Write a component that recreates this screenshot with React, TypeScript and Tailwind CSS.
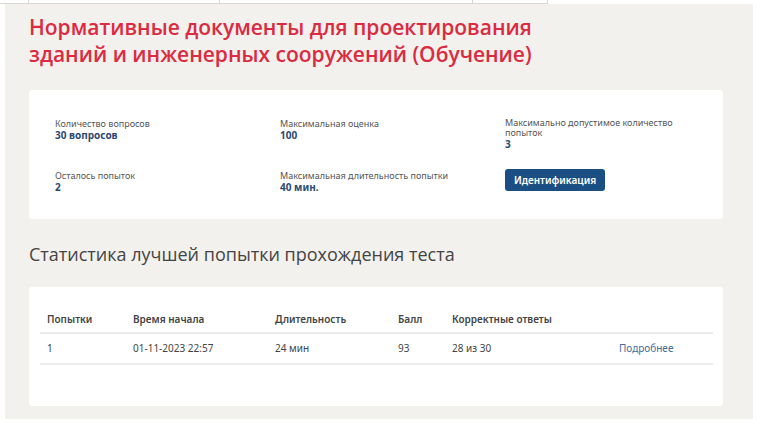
import React from 'react';

const cells = [29, 191, 253, 75];

const Info: React.FC<{ label: string; value: string }> = ({ label, value }) => (
  <div>
    <div className="text-[9px] leading-[11px] text-[#555]">{label}</div>
    <div className="text-[10px] leading-[12px] font-bold text-[#2b4a70]">{value}</div>
  </div>
);

const App: React.FC = () => {
  return (
    <div className="w-[761px] h-[431px] bg-white overflow-hidden" style={{ fontFamily: '"Open Sans", "Noto Sans", sans-serif' }}>
      {/* strip from the table above */}
      <div className="flex h-[4px]">
        {cells.map((w, i) => (
          <div key={i} className="h-[4px] border-r border-b border-[#d6d6d6]" style={{ width: w }} />
        ))}
      </div>

      <div className="ml-[5px] w-[748px] h-[415px] bg-[#f2f1ee] pl-[24px] pr-[30px] pt-[10px]">
        <h1 className="text-[21px] leading-[27px] font-semibold text-[#dc2a40]">
          Нормативные документы для проектирования
          <br />
          зданий и инженерных сооружений (Обучение)
        </h1>

        <div className="mt-[22px] h-[129px] bg-white rounded-[3px] pl-[26px] pt-[28px]" style={{ fontFamily: '"Noto Sans", "Open Sans", sans-serif' }}>
          <div className="flex h-[51px] items-start">
            <div className="w-[225px]">
              <Info label="Количество вопросов" value="30 вопросов" />
            </div>
            <div className="w-[225px]">
              <Info label="Максимальная оценка" value="100" />
            </div>
            <div className="w-[175px]">
              <div className="text-[9px] leading-[10px] text-[#555]">Максимально допустимое количество попыток</div>
              <div className="text-[10px] leading-[12px] font-bold text-[#2b4a70]">3</div>
            </div>
          </div>
          <div className="flex items-start">
            <div className="w-[225px] pt-[1px]">
              <Info label="Осталось попыток" value="2" />
            </div>
            <div className="w-[225px] pt-[1px]">
              <Info label="Максимальная длительность попытки" value="40 мин." />
            </div>
            <button className="w-[100px] h-[22px] rounded-[3px] bg-[#1b4f83] text-white text-[10px] font-semibold">
              Идентификация
            </button>
          </div>
        </div>

        <h2 className="mt-[23px] text-[18px] leading-[24px] text-[#444]">
          Статистика лучшей попытки прохождения теста
        </h2>

        <div className="mt-[21px] h-[119px] bg-white rounded-[3px] px-[11px] pt-[20px]" style={{ fontFamily: '"Noto Sans", "Open Sans", sans-serif' }}>
          <table className="w-[673px] table-fixed text-[10px] text-[#444]">
            <colgroup>
              <col className="w-[86px]" />
              <col className="w-[142px]" />
              <col className="w-[123px]" />
              <col className="w-[54px]" />
              <col className="w-[167px]" />
              <col />
            </colgroup>
            <thead>
              <tr className="h-[26px] border-b-2 border-[#ececec] text-left">
                <th className="pl-[7px] font-semibold">Попытки</th>
                <th className="pl-[7px] font-semibold">Время начала</th>
                <th className="pl-[7px] font-semibold">Длительность</th>
                <th className="pl-[7px] font-semibold">Балл</th>
                <th className="pl-[7px] font-semibold">Корректные ответы</th>
                <th />
              </tr>
            </thead>
            <tbody>
              <tr className="h-[31px] border-b-2 border-[#ececec]">
                <td className="pl-[7px]">1</td>
                <td className="pl-[7px]">01-11-2023 22:57</td>
                <td className="pl-[7px]">24 мин</td>
                <td className="pl-[7px]">93</td>
                <td className="pl-[7px]">28 из 30</td>
                <td className="pl-[7px] text-[#3f6f9c]">Подробнее</td>
              </tr>
            </tbody>
          </table>
        </div>
      </div>
    </div>
  );
};

export default App;
